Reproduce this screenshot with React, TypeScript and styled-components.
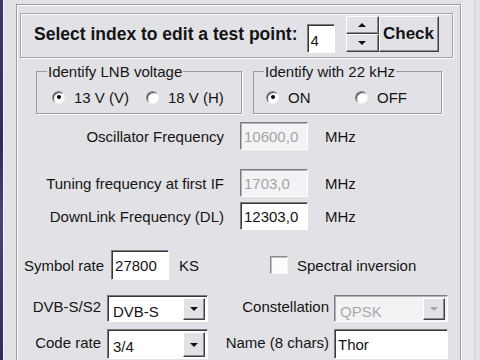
import styled, { createGlobalStyle } from "styled-components";

const GlobalStyle = createGlobalStyle`
    html, body {
        margin: 0;
        padding: 0;
        background: #e2e2e6;
    }
    body {
        font-family: "Liberation Sans", Arial, sans-serif;
    }
`;

const Screen = styled.div`
    width: 480px;
    height: 360px;
    overflow: hidden;
    display: flex;
    background: #e2e2e6;
    color: #141414;
    font-size: 15px;
`;

const LeftEdge = styled.div`
    flex: none;
    width: 3px;
    background: linear-gradient(#3a3a6e, #2c2c5e 40%, #45457a 60%, #2c2c5e);
    border-right: 1px solid #f6f6f8;
`;

const Frame = styled.div`
    flex: none;
    margin: 4px 0 0 12px;
    width: 445px;
    border: 1px solid #9c9ca2;
    border-bottom: none;
    box-shadow: inset 1px 1px 0 #ffffff, 1px 0 0 #ffffff;
    padding-top: 8px;
    box-sizing: border-box;
`;

const RightEdge = styled.div`
    flex: 1;
    margin-left: 2px;
    background: #e9e9ed;
    border-right: 1px solid #d2d2d6;
    margin-right: 5px;
`;

const TopBar = styled.div`
    margin-left: 3px;
    width: 433px;
    height: 45px;
    box-sizing: border-box;
    border: 1px solid #a2a2a8;
    box-shadow: inset 1px 1px 0 #ffffff, 1px 1px 0 #ffffff;
    display: flex;
    align-items: center;
    padding-left: 13px;
`;

const Title = styled.span`
    font-size: 17.5px;
    font-weight: 700;
    margin-top: -3px;
`;

const Field = styled.input<{ $w: number; $h: number; $disabled?: boolean }>`
    width: ${(p) => p.$w}px;
    height: ${(p) => p.$h}px;
    box-sizing: border-box;
    margin: 0;
    padding: 0 0 0 3px;
    border: 1px solid;
    border-color: #7c7c80 #ffffff #ffffff #7c7c80;
    box-shadow: inset 1px 1px 0 ${(p) => (p.$disabled ? "#b4b4b8" : "#38383c")};
    background: ${(p) => (p.$disabled ? "#f3f3f5" : "#ffffff")};
    color: ${(p) => (p.$disabled ? "#a4a4a8" : "#141414")};
    font-family: "Liberation Sans", Arial, sans-serif;
    font-size: 15px;
    outline: none;
`;

const IndexField = styled(Field)`
    margin: 5px 0 0 9px;
    padding-top: 4px;
`;

const Spin = styled.div`
    display: flex;
    flex-direction: column;
    margin-left: 11px;
    margin-top: -3px;
`;

const RaisedButton = styled.button`
    box-sizing: border-box;
    margin: 0;
    padding: 0;
    background: #e2e2e6;
    border: 1px solid;
    border-color: #ffffff #404044 #404044 #ffffff;
    box-shadow: inset -1px -1px 0 #8c8c92;
    color: #141414;
    font-family: "Liberation Sans", Arial, sans-serif;
    display: flex;
    align-items: center;
    justify-content: center;
`;

const SpinButton = styled(RaisedButton)`
    width: 33px;
    height: 18px;
`;

const CheckButton = styled(RaisedButton)`
    width: 60px;
    height: 36px;
    margin-top: -3px;
    font-size: 17px;
    font-weight: 700;
`;

const Arrow = styled.span<{ $up?: boolean; $faded?: boolean }>`
    width: 0;
    height: 0;
    border-left: 4px solid transparent;
    border-right: 4px solid transparent;
    ${(p) =>
        p.$up
            ? `border-bottom: 4px solid ${p.$faded ? "#a4a4a8" : "#111"};`
            : `border-top: 4px solid ${p.$faded ? "#a4a4a8" : "#111"};`}
`;

const Groups = styled.div`
    display: flex;
    gap: 11px;
    margin: 5px 0 0 19px;
`;

const Group = styled.fieldset<{ $w: number }>`
    width: ${(p) => p.$w}px;
    box-sizing: border-box;
    margin: 0;
    padding: 7px 0 6px 0;
    border: 1px solid #9c9ca2;
    box-shadow: 1px 1px 0 #ffffff;
`;

const Legend = styled.legend`
    margin-left: 10px;
    padding: 0 1px;
    font-size: 15px;
    line-height: 17px;
    background: #e2e2e6;
`;

const RadioRow = styled.div<{ $pl: number }>`
    display: flex;
    padding-left: ${(p) => p.$pl}px;
`;

const RadioLabel = styled.label<{ $w?: number }>`
    display: flex;
    align-items: center;
    gap: 9px;
    height: 20px;
    ${(p) => (p.$w ? `width: ${p.$w}px;` : "")}
`;

const RadioDot = styled.span<{ $on?: boolean }>`
    width: 13px;
    height: 13px;
    box-sizing: border-box;
    border-radius: 50%;
    border: 1px solid;
    border-color: #86868a #f2f2f4 #f2f2f4 #86868a;
    box-shadow: inset 1px 1px 0 #48484c;
    background: #ffffff;
    display: flex;
    align-items: center;
    justify-content: center;
    &::after {
        content: "";
        width: 4px;
        height: 4px;
        border-radius: 50%;
        background: ${(p) => (p.$on ? "#000" : "transparent")};
    }
`;

const FreqRow = styled.div<{ $top: number }>`
    display: flex;
    align-items: center;
    margin-top: ${(p) => p.$top}px;
`;

const FreqLabel = styled.span`
    width: 207px;
    text-align: right;
    margin-right: 16px;
`;

const Unit = styled.span`
    margin-left: 17px;
`;

const Row = styled.div<{ $top: number }>`
    display: flex;
    align-items: center;
    margin-top: ${(p) => p.$top}px;
`;

const SymbolCell = styled.div`
    width: 253px;
    display: flex;
    align-items: center;
    padding-left: 7px;
    box-sizing: border-box;
    gap: 7px;
`;

const KS = styled.span`
    margin-left: 3px;
`;

const CheckLabel = styled.label`
    display: flex;
    align-items: center;
    gap: 9px;
`;

const CheckBox = styled.span`
    width: 18px;
    height: 18px;
    box-sizing: border-box;
    border: 1px solid;
    border-color: #8a8a8e #f4f4f6 #f4f4f6 #8a8a8e;
    box-shadow: inset 1px 1px 0 #c0c0c4;
    background: #fbfbfb;
`;

const RightLabel = styled.span<{ $w: number; $gap: number }>`
    width: ${(p) => p.$w}px;
    text-align: right;
    margin-right: ${(p) => p.$gap}px;
    margin-top: -4px;
`;

const Select = styled.div<{ $w: number; $h: number; $disabled?: boolean }>`
    width: ${(p) => p.$w}px;
    height: ${(p) => p.$h}px;
    box-sizing: border-box;
    border: 1px solid;
    border-color: #7c7c80 #ffffff #ffffff #7c7c80;
    box-shadow: inset 1px 1px 0 ${(p) => (p.$disabled ? "#b4b4b8" : "#38383c")};
    background: ${(p) => (p.$disabled ? "#f3f3f5" : "#ffffff")};
    color: ${(p) => (p.$disabled ? "#a8a8ac" : "#141414")};
    display: flex;
    align-items: center;
    padding: 2px 2px 1px 5px;
`;

const SelectText = styled.span`
    flex: 1;
    margin-top: 4px;
`;

const DropButton = styled(RaisedButton)`
    width: 22px;
    height: 100%;
`;

function Radio({ label, on, w }: { label: string; on?: boolean; w?: number }) {
    return (
        <RadioLabel $w={w}>
            <RadioDot $on={on} />
            <span>{label}</span>
        </RadioLabel>
    );
}

function Dropdown({ value, w, h, disabled }: { value: string; w: number; h: number; disabled?: boolean }) {
    return (
        <Select $w={w} $h={h} $disabled={disabled}>
            <SelectText>{value}</SelectText>
            <DropButton type="button">
                <Arrow $faded={disabled} />
            </DropButton>
        </Select>
    );
}

export default function App() {
    return (
        <Screen>
            <GlobalStyle />
            <LeftEdge />
            <Frame>
                <TopBar>
                    <Title>Select index to edit a test point:</Title>
                    <IndexField $w={28} $h={29} defaultValue="4" readOnly />
                    <Spin>
                        <SpinButton type="button"><Arrow $up /></SpinButton>
                        <SpinButton type="button"><Arrow /></SpinButton>
                    </Spin>
                    <CheckButton type="button">Check</CheckButton>
                </TopBar>

                <Groups>
                    <Group $w={206}>
                        <Legend>Identify LNB voltage</Legend>
                        <RadioRow $pl={15}>
                            <Radio label="13 V (V)" on w={94} />
                            <Radio label="18 V (H)" />
                        </RadioRow>
                    </Group>
                    <Group $w={189}>
                        <Legend>Identify with 22 kHz</Legend>
                        <RadioRow $pl={12}>
                            <Radio label="ON" on w={89} />
                            <Radio label="OFF" />
                        </RadioRow>
                    </Group>
                </Groups>

                <FreqRow $top={8}>
                    <FreqLabel>Oscillator Frequency</FreqLabel>
                    <Field $w={68} $h={28} $disabled defaultValue="10600,0" readOnly />
                    <Unit>MHz</Unit>
                </FreqRow>
                <FreqRow $top={19}>
                    <FreqLabel>Tuning frequency at first IF</FreqLabel>
                    <Field $w={68} $h={28} $disabled defaultValue="1703,0" readOnly />
                    <Unit>MHz</Unit>
                </FreqRow>
                <FreqRow $top={5}>
                    <FreqLabel>DownLink Frequency (DL)</FreqLabel>
                    <Field $w={68} $h={28} defaultValue="12303,0" readOnly />
                    <Unit>MHz</Unit>
                </FreqRow>

                <Row $top={20}>
                    <SymbolCell>
                        <span>Symbol rate</span>
                        <Field $w={58} $h={30} defaultValue="27800" readOnly />
                        <KS>KS</KS>
                    </SymbolCell>
                    <CheckLabel>
                        <CheckBox />
                        <span>Spectral inversion</span>
                    </CheckLabel>
                </Row>
                <Row $top={15}>
                    <RightLabel $w={84} $gap={6}>DVB-S/S2</RightLabel>
                    <Dropdown value="DVB-S" w={101} h={27} />
                    <RightLabel $w={121} $gap={5}>Constellation</RightLabel>
                    <Dropdown value="QPSK" w={114} h={27} disabled />
                </Row>
                <Row $top={7}>
                    <RightLabel $w={84} $gap={6}>Code rate</RightLabel>
                    <Dropdown value="3/4" w={101} h={30} />
                    <RightLabel $w={121} $gap={5}>Name (8 chars)</RightLabel>
                    <Field $w={114} $h={30} defaultValue="Thor" readOnly />
                </Row>
            </Frame>
            <RightEdge />
        </Screen>
    );
}
